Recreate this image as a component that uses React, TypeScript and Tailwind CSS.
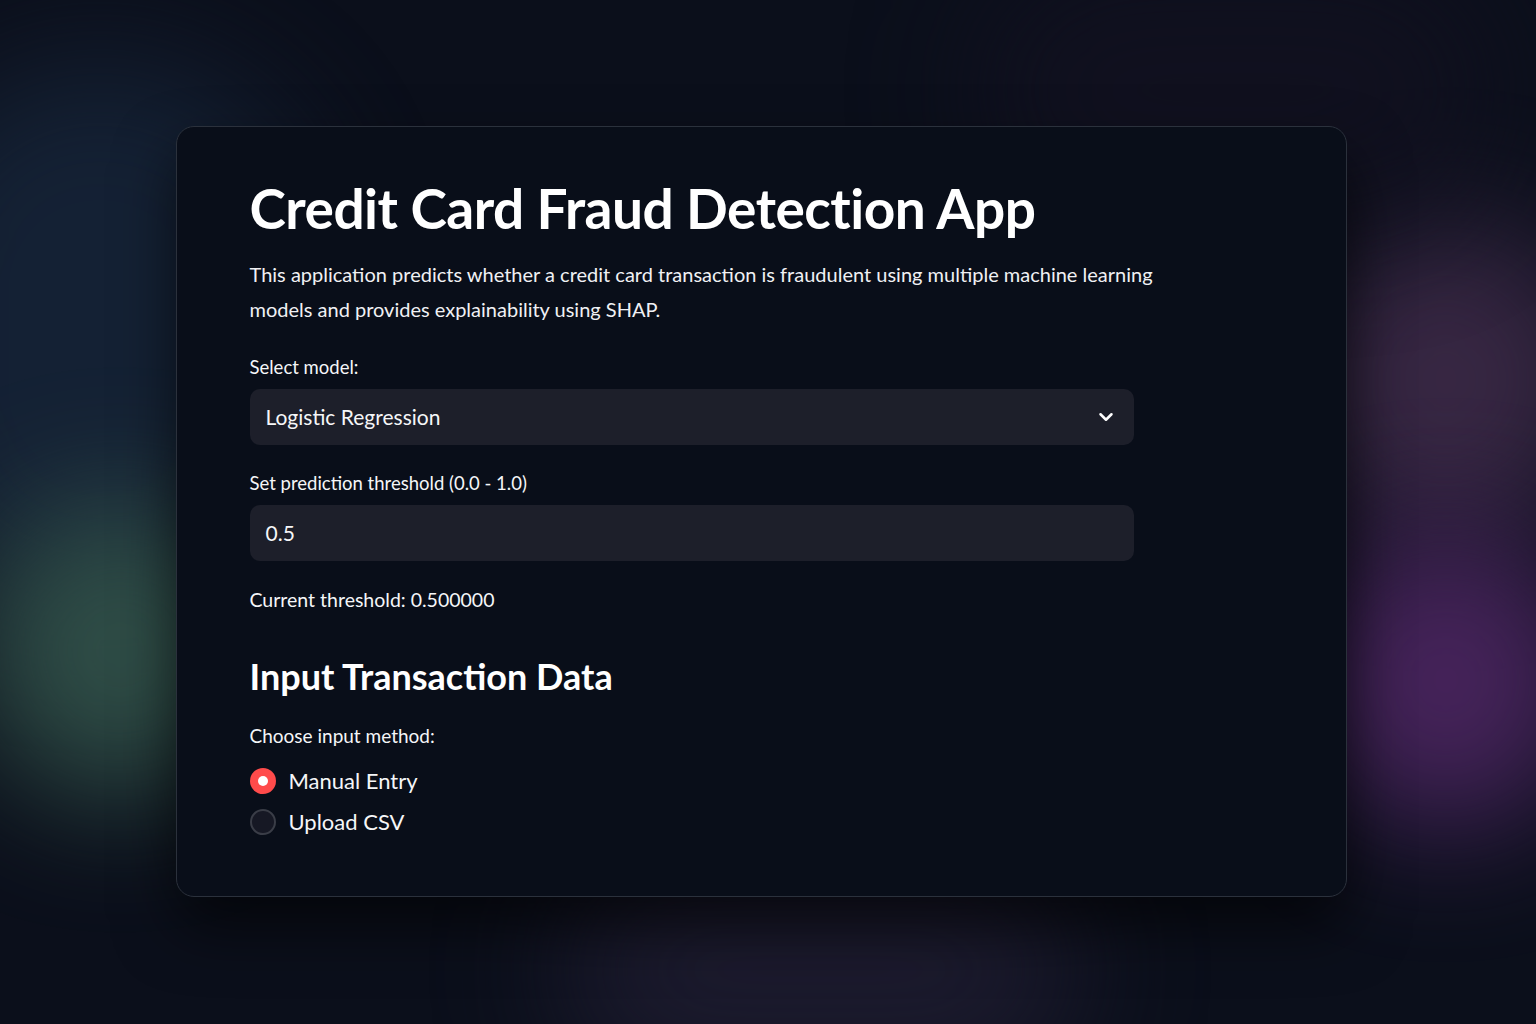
import React, { useState } from 'react';
import { ChevronDown } from 'lucide-react';

const font = { fontFamily: '"Source Sans Pro", Lato, "Noto Sans", sans-serif' };

function Glow({ className }: { className: string }) {
  return <div className={`pointer-events-none absolute rounded-full blur-3xl ${className}`} />;
}

export default function App() {
  const [model] = useState('Logistic Regression');
  const [threshold] = useState('0.5');
  const [method, setMethod] = useState<'manual' | 'csv'>('manual');

  return (
    <div
      className="relative min-h-screen w-full overflow-hidden bg-[#0b0f1b] text-[#f5f6f8]"
      style={font}
    >
      {/* background haze */}
      <Glow className="left-[-120px] top-[60px] h-[560px] w-[440px] bg-[#17263b] opacity-80" />
      <Glow className="left-[-30px] top-[500px] h-[300px] w-[300px] bg-[#33544b] opacity-90" />
      <Glow className="right-[-60px] top-[220px] h-[320px] w-[300px] bg-[#3d2a48] opacity-90" />
      <Glow className="right-[-50px] top-[530px] h-[300px] w-[280px] bg-[#4d2662] opacity-90" />
      <Glow className="right-[40px] top-[-40px] h-[260px] w-[520px] bg-[#121120] opacity-80" />
      <Glow className="left-[560px] top-[860px] h-[220px] w-[520px] bg-[#1e1c30] opacity-90" />

      <div className="relative flex justify-center pt-[126px] pr-[14px]">
        <div className="w-[1171px] h-[771px] rounded-[18px] border border-[#2b313c] bg-[#090e19] shadow-[0_30px_60px_rgba(0,0,0,0.6)] pl-[73px] pt-[43px]">
          <h1 className="text-[55px] font-bold leading-[76px] tracking-[-0.5px] text-white">
            Credit Card Fraud Detection App
          </h1>
          <p className="mt-[11px] w-[930px] text-[20px] leading-[35px] text-[#f0f1f4]">
            This application predicts whether a credit card transaction is fraudulent using multiple machine learning
            models and provides explainability using SHAP.
          </p>

          <label className="mt-[26px] block text-[18.5px] leading-[28px]">Select model:</label>
          <div className="mt-[8px] flex h-[56px] w-[884px] items-center justify-between rounded-[10px] bg-[#1d1f2a] pl-[16px] pr-[17px]">
            <span className="text-[21px]">{model}</span>
            <ChevronDown className="h-[22px] w-[22px] text-white" strokeWidth={2.75} />
          </div>

          <label className="mt-[24px] block text-[18.5px] leading-[28px]">Set prediction threshold (0.0 - 1.0)</label>
          <div className="mt-[8px] flex h-[56px] w-[884px] items-center rounded-[10px] bg-[#1d1f2a] pl-[16px]">
            <span className="text-[21px]">{threshold}</span>
          </div>

          <p className="mt-[24px] text-[19.5px] leading-[30px]">Current threshold: 0.500000</p>

          <h2 className="mt-[38px] text-[36px] font-bold leading-[46px] text-white">Input Transaction Data</h2>

          <p className="mt-[23px] text-[19px] leading-[28px]">Choose input method:</p>

          <div className="mt-[17px] flex flex-col gap-[14px]">
            {[
              { id: 'manual' as const, label: 'Manual Entry' },
              { id: 'csv' as const, label: 'Upload CSV' },
            ].map((opt) => {
              const active = method === opt.id;
              return (
                <button
                  key={opt.id}
                  onClick={() => setMethod(opt.id)}
                  className="flex h-[27px] items-center gap-[13px] text-left"
                >
                  {active ? (
                    <span className="flex h-[26px] w-[26px] items-center justify-center rounded-full bg-[#ff4b4b]">
                      <span className="h-[10px] w-[10px] rounded-full bg-white" />
                    </span>
                  ) : (
                    <span className="h-[26px] w-[26px] rounded-full border-2 border-[#3a3d47] bg-[#161824]" />
                  )}
                  <span className="text-[22px] leading-[27px]">{opt.label}</span>
                </button>
              );
            })}
          </div>
        </div>
      </div>
    </div>
  );
}
